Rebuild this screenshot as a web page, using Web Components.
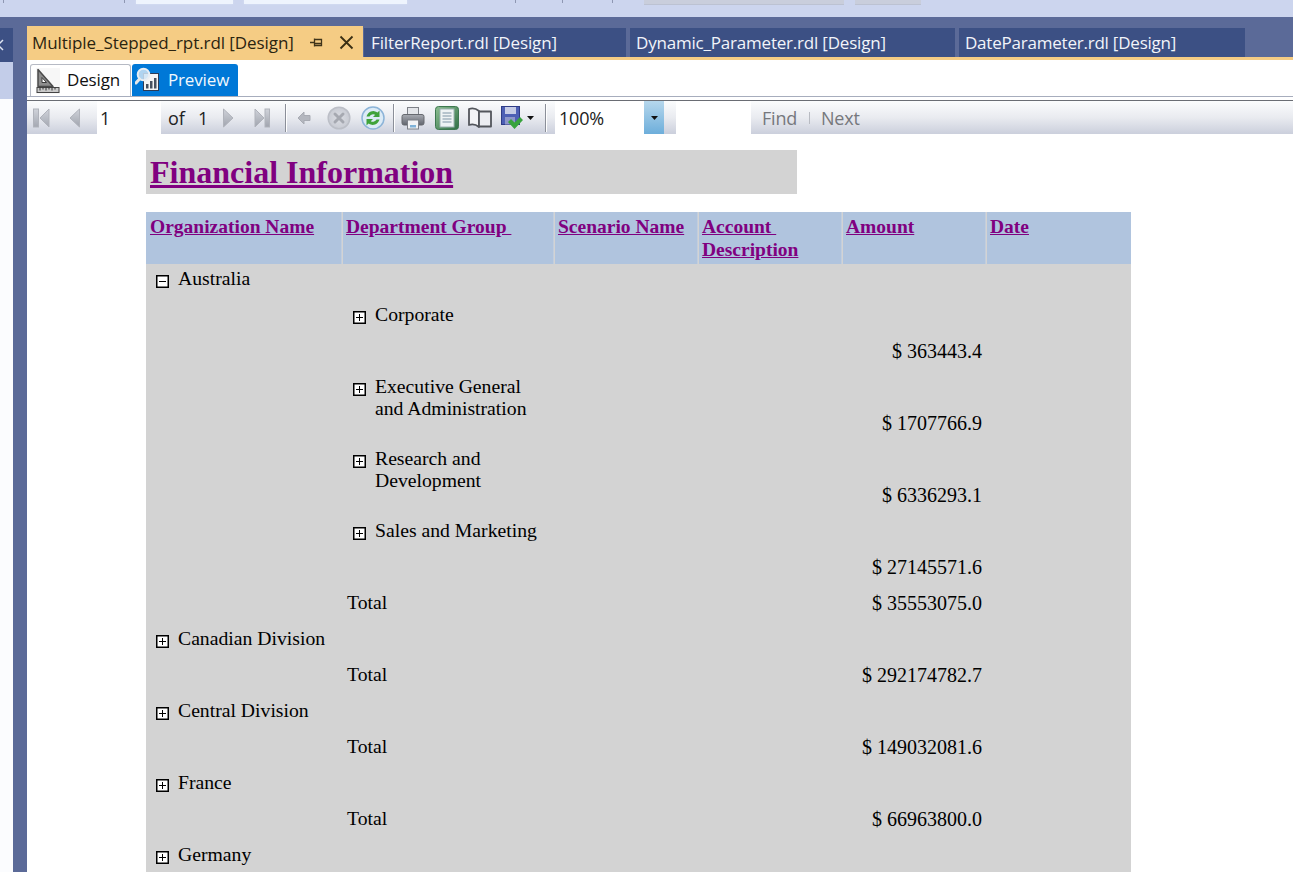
<!DOCTYPE html>
<html lang="en">
<head>
<meta charset="utf-8">
<title>Financial Information</title>
<style>
html,body{margin:0;padding:0;height:872px;overflow:hidden;background:#fff}
</style>
</head>
<body>
<vs-shell>
  <side-panel slot="side"></side-panel>
  <tab-strip slot="tabs">
    <doc-tab active w="336">Multiple_Stepped_rpt.rdl [Design]</doc-tab>
    <doc-tab w="262" style="padding-left:7px">FilterReport.rdl [Design]</doc-tab>
    <doc-tab w="325" style="letter-spacing:-.2px">Dynamic_Parameter.rdl [Design]</doc-tab>
    <doc-tab w="286" style="letter-spacing:-.22px">DateParameter.rdl [Design]</doc-tab>
  </tab-strip>
  <view-tabs slot="views"></view-tabs>
  <report-toolbar slot="toolbar"></report-toolbar>
  <financial-report slot="report"></financial-report>
</vs-shell>

<script>
const ICONS = {
  first:`<svg width="17" height="20" viewBox="0 0 17 20"><defs><linearGradient id="g" x1="0" y1="0" x2="0" y2="1"><stop offset="0" stop-color="#d0d3da"/><stop offset="1" stop-color="#a4a8b2"/></linearGradient></defs><rect x="0.5" y="1" width="5" height="18" fill="url(#g)" stroke="#b0b3bb"/><path d="M16 1 7 10l9 9z" fill="url(#g)" stroke="#b0b3bb" stroke-linejoin="round"/></svg>`,
  prev:`<svg width="15" height="20" viewBox="0 0 15 20"><defs><linearGradient id="g" x1="0" y1="0" x2="0" y2="1"><stop offset="0" stop-color="#d0d3da"/><stop offset="1" stop-color="#a0a4ae"/></linearGradient></defs><path d="M12.500 1 3 10l9.500 9z" fill="url(#g)" stroke="#b0b3bb" stroke-linejoin="round"/></svg>`,
  next:`<svg width="13" height="20" viewBox="0 0 13 20"><defs><linearGradient id="g" x1="0" y1="0" x2="0" y2="1"><stop offset="0" stop-color="#d0d3da"/><stop offset="1" stop-color="#a0a4ae"/></linearGradient></defs><path d="M1.500 1 11 10l-9.500 9z" fill="url(#g)" stroke="#b0b3bb" stroke-linejoin="round"/></svg>`,
  last:`<svg width="16" height="20" viewBox="0 0 16 20"><defs><linearGradient id="g" x1="0" y1="0" x2="0" y2="1"><stop offset="0" stop-color="#d0d3da"/><stop offset="1" stop-color="#a0a4ae"/></linearGradient></defs><path d="M1 1l9 9-9 9z" fill="url(#g)" stroke="#b0b3bb" stroke-linejoin="round"/><rect x="11" y="1" width="4.500" height="18" fill="url(#g)" stroke="#b0b3bb"/></svg>`,
  back:`<svg width="14" height="14" viewBox="0 0 14 14"><path d="M7 1 1 7l6 6V9.500h6v-5H7z" fill="#b4b7bf" stroke="#a8abb3" stroke-linejoin="round"/></svg>`,
  stop:`<svg width="24" height="24" viewBox="0 0 24 24"><defs><radialGradient id="g"><stop offset="0" stop-color="#dcdee4"/><stop offset="1" stop-color="#c8cbd3"/></radialGradient></defs><circle cx="12" cy="12" r="10.800" fill="url(#g)" stroke="#bcbfc7" stroke-width="1.500"/><path d="M8 8l8 8M16 8l-8 8" stroke="#a6a9b1" stroke-width="3" stroke-linecap="round"/></svg>`,
  refresh:`<svg width="24" height="24" viewBox="0 0 24 24"><circle cx="12" cy="12" r="11" fill="#dcebf6" stroke="#8cb4d8" stroke-width="1.500"/><path d="M5.500 10.500A7 7 0 0 1 16.500 6.500L18.500 4.500V11h-6.500l2.200-2.200A4 4 0 0 0 8.500 10.500z" fill="#3fa33a"/><path d="M18.500 13.500A7 7 0 0 1 7.500 17.500L5.500 19.500V13h6.500l-2.200 2.200A4 4 0 0 0 15.500 13.500z" fill="#3fa33a"/></svg>`,
  print:`<svg width="24" height="24" viewBox="0 0 24 24"><defs><linearGradient id="g" x1="0" y1="0" x2="0" y2="1"><stop offset="0" stop-color="#a8abb2"/><stop offset="1" stop-color="#62666e"/></linearGradient></defs><rect x="6.500" y="1.500" width="11" height="8" fill="#e3e5e9" stroke="#7d8087"/><rect x="1" y="8.500" width="22" height="10.500" rx="2" fill="url(#g)" stroke="#66696f"/><rect x="6.500" y="14" width="11" height="9" fill="#f2f3f5" stroke="#7d8087"/><rect x="9" y="19" width="6" height="2.500" fill="#7fb2d8"/></svg>`,
  page:`<svg width="24" height="24" viewBox="0 0 24 24"><defs><linearGradient id="g" x1="0" y1="0" x2="1" y2="1"><stop offset="0" stop-color="#8dbf92"/><stop offset="1" stop-color="#2f6f45"/></linearGradient></defs><rect x="0.500" y="0.500" width="23" height="23" rx="3" fill="url(#g)" stroke="#3d7850"/><rect x="5" y="3" width="14" height="18" fill="#eef3f4" stroke="#9db3b3"/><path d="M7.500 7h9M7.500 10h9M7.500 13h9M7.500 16h9" stroke="#7f95a5" stroke-width="1.200"/></svg>`,
  book:`<svg width="24" height="24" viewBox="0 0 24 24"><path d="M11 5C8 2.500 4 2 1 3v16c3-1 7-.5 10 2z" fill="#f3f4f6" stroke="#53565c" stroke-width="1.800" stroke-linejoin="round"/><path d="M11 5.500h12V20.500H11z" fill="#eceef2" stroke="#53565c" stroke-width="1.800" stroke-linejoin="round"/></svg>`,
  save:`<svg width="23" height="24" viewBox="0 0 23 24"><rect x="0.500" y="0.500" width="18" height="18" fill="#4d5fb5" stroke="#2f3c86"/><rect x="4" y="1" width="11" height="7" fill="#c6cce6"/><rect x="4" y="11" width="10" height="7.500" fill="#8d96c9"/><path d="M10 13l3.500 3.500L19 11l3 3-8.500 9L7 16z" fill="#37a33c"/></svg>`,
  caret:`<svg width="7" height="4" viewBox="0 0 7 4"><path d="M0 0h7L3.500 4z" fill="#111"/></svg>`,
  design:`<svg width="24" height="26" viewBox="0 0 24 26"><rect x="0" y="0" width="24" height="26" fill="#e8e8e8" opacity=".35"/><path d="M2 1.500v17l15 0z" fill="#8d8d8d" stroke="#4a4a4a" stroke-width="1.500" stroke-linejoin="round"/><path d="M6 9.500v5h4.500z" fill="#fff" stroke="#3a3a3a"/><rect x="1" y="19.500" width="22" height="5" fill="#c9c9c9" stroke="#444"/><path d="M4 19.500v3M7 19.500v2M10 19.500v3M13 19.500v2M16 19.500v3M19 19.500v2" stroke="#333"/></svg>`,
  preview:`<svg width="26" height="26" viewBox="0 0 26 26"><rect x="8.500" y="6.500" width="15" height="17" fill="#f4f4f4" stroke="#2b3a55"/><rect x="11" y="17" width="2.500" height="4.500" fill="#47505f"/><rect x="15" y="14" width="2.500" height="7.500" fill="#47505f"/><rect x="19" y="11" width="2.500" height="10.500" fill="#47505f"/><circle cx="8.500" cy="7.500" r="5.800" fill="#cfe4f5" fill-opacity=".85" stroke="#e9eef3" stroke-width="2"/><path d="M4.500 12 1 16" stroke="#e8e8e8" stroke-width="3" stroke-linecap="round"/></svg>`
};

class RsIcon extends HTMLElement{
  connectedCallback(){
    const r=this.shadowRoot||this.attachShadow({mode:'open'});
    r.innerHTML=`<style>:host{display:inline-flex;flex:none;align-items:center;justify-content:center}svg{display:block}</style>${ICONS[this.getAttribute('name')]||''}`;
  }
}
customElements.define('rs-icon',RsIcon);

class VsShell extends HTMLElement{
  constructor(){super();this.attachShadow({mode:'open'}).innerHTML=`<style>
    :host{display:grid;grid-template-columns:13px 14px 1fr;grid-template-rows:17px 1fr;width:1293px;height:872px;overflow:hidden;background:#5b6a98}
    .top{grid-column:1/4;background:#ccd5ee;display:flex;align-items:flex-start}
    .top i{display:block;flex:none;height:4px}
    .tick{width:1px;background:#8e97b2;height:3px!important}
    .field{background:#eef4fd;box-shadow:0 0 2px #dbe3f5}
    .grey{background:#c9cedc;height:4px;box-shadow:0 1px 0 #bcc2d2}
    .side{grid-column:1;grid-row:2;overflow:hidden}
    .frame{grid-column:2;grid-row:2;background:#5b6a98}
    .main{grid-column:3;grid-row:2;display:flex;flex-direction:column;background:#fff;min-width:0;min-height:0;overflow:hidden}
    .head{background:#5b6a98;flex:none}
  </style>
  <div class="top">
    <i class="tick" style="margin-left:3px"></i>
    <i class="tick" style="margin-left:120px"></i>
    <i class="field" style="margin-left:11px;width:97px"></i>
    <i class="field" style="margin-left:11px;width:163px"></i>
    <i class="tick" style="margin-left:108px"></i>
    <i class="tick" style="margin-left:46px"></i>
    <i class="tick" style="margin-left:49px"></i>
    <i class="grey" style="margin-left:31px;width:200px"></i>
    <i class="grey" style="margin-left:11px;width:66px"></i>
  </div>
  <div class="side"><slot name="side"></slot></div>
  <div class="frame"></div>
  <div class="main">
    <div class="head"><slot name="tabs"></slot></div>
    <slot name="views"></slot>
    <slot name="toolbar"></slot>
    <slot name="report"></slot>
  </div>`}
}
customElements.define('vs-shell',VsShell);

class SidePanel extends HTMLElement{
  constructor(){super();this.attachShadow({mode:'open'}).innerHTML=`<style>
    :host{display:flex;flex-direction:column;height:100%}
    .gap{height:11px;background:#5b6a98}
    .a{height:34px;background:#3c5084;overflow:hidden;display:flex;align-items:center}
    .a svg{display:block;margin-left:-4px}
    .b{height:37px;background:#c3cde9}
    .c{flex:1;background:#fbfcfe}
  </style>
  <div class="gap"></div>
  <div class="a"><svg width="9" height="14" viewBox="0 0 9 14"><path d="M7 2 2 7l5 5" fill="none" stroke="#dfe5f2" stroke-width="1.500"/></svg></div>
  <div class="b"></div><div class="c"></div>`}
}
customElements.define('side-panel',SidePanel);

class TabStrip extends HTMLElement{
  constructor(){super();this.attachShadow({mode:'open'}).innerHTML=`<style>
    :host{display:flex;align-items:flex-end;height:43px;box-sizing:border-box;padding-top:9px;background:#5b6a98;border-bottom:3px solid #f5cc84}
    .row{display:flex;gap:4px;align-items:flex-start;height:34px;margin-bottom:-3px}
  </style><div class="row"><slot></slot></div>`}
}
customElements.define('tab-strip',TabStrip);

class DocTab extends HTMLElement{
  constructor(){super();this.attachShadow({mode:'open'}).innerHTML=`<style>
    :host{display:flex;flex:none;align-items:center;box-sizing:border-box;height:29px;margin-top:2px;padding-left:6px;background:#3c5084;color:#f2f4fa;font:17px/29px "Open Sans",sans-serif;letter-spacing:-.13px;white-space:nowrap}
    :host([active]){height:34px;margin-top:0;margin-right:-3px;padding-left:5px;padding-bottom:1px;background:#f5cc84;color:#2b2410;letter-spacing:-.07px}
    .ctl{display:none}
    :host([active]) .ctl{display:flex;align-items:center;margin-left:16px;gap:16px}
    svg{display:block}
  </style><span><slot></slot></span>
  <span class="ctl">
    <svg width="13" height="11" viewBox="0 0 13 11"><path d="M0 5.500h4M4.500 1.500v8M4.500 2.500h7v6h-7M4.500 6.500h7" fill="none" stroke="#40341a" stroke-width="1.300"/></svg>
    <svg width="15" height="15" viewBox="0 0 15 15"><path d="M1.500 1.500l12 12M13.500 1.500l-12 12" stroke="#3a2f14" stroke-width="1.800"/></svg>
  </span>`}
  connectedCallback(){this.style.width=this.getAttribute('w')+'px'}
}
customElements.define('doc-tab',DocTab);

class ViewTabs extends HTMLElement{
  constructor(){super();this.attachShadow({mode:'open'}).innerHTML=`<style>
    :host{display:flex;flex:none;align-items:flex-end;box-sizing:border-box;height:37px;padding-left:3px;background:#fff;border-bottom:1px solid #a7adbd;font:17px "Open Sans",sans-serif;letter-spacing:-.15px}
    .t{display:flex;align-items:center;box-sizing:border-box;height:32px;border-radius:3px 3px 0 0}
    .t span{margin-bottom:2px}
    .d{width:101px;padding-left:5px;gap:7px;color:#111;border:1px solid #b6bac4;border-bottom:0}
    .p{width:106px;padding-left:3px;gap:7px;color:#f2f8fd;background:#0078d7;margin-left:1px}
  </style>
  <div class="t d"><rs-icon name="design"></rs-icon><span>Design</span></div>
  <div class="t p"><rs-icon name="preview"></rs-icon><span>Preview</span></div>`}
}
customElements.define('view-tabs',ViewTabs);

class ReportToolbar extends HTMLElement{
  constructor(){super();
    const ic=(n,ml,w)=>`<rs-icon name="${n}" style="margin-left:${ml}px;width:${w}px"></rs-icon>`;
    const sep=(ml)=>`<i class="sep" style="margin-left:${ml}px"></i>`;
    this.attachShadow({mode:'open'}).innerHTML=`<style>
    :host{display:flex;flex:none;align-items:center;box-sizing:border-box;height:34px;margin-top:3px;background:linear-gradient(#fbfcfd,#e9ebf0 50%,#cbcfdc);border-top:1px solid #6a6d74;font:18px "Open Sans",sans-serif;color:#222;letter-spacing:-.2px}
    .sep{display:block;flex:none;width:1px;height:28px;background:#8b8f99;box-shadow:1px 0 0 #fff}
    .input{flex:none;box-sizing:border-box;height:33px;background:#fff;display:flex;align-items:center}
    span{flex:none;white-space:nowrap}
    .drop{flex:none;width:20px;height:33px;background:linear-gradient(#b6d7ec,#6daedb);display:flex;align-items:center;justify-content:center}
    .mute{color:#76787d}
    .pipe{display:block;flex:none;width:1px;height:12px;background:#b8bbc2}
  </style>
  ${ic('first',6,17)}${ic('prev',17,15)}
  <div class="input" style="margin-left:15px;width:64px;padding-left:3px">1</div>
  <span style="margin-left:7px;width:30px">of</span><span style="width:24px">1</span>
  ${ic('next',0,13)}${ic('last',19,16)}
  ${sep(15)}${ic('back',11,14)}${ic('stop',16,24)}${ic('refresh',10,24)}
  ${sep(8)}${ic('print',7,24)}${ic('page',10,24)}${ic('book',9,24)}${ic('save',9,23)}${ic('caret',3,7)}
  ${sep(11)}
  <div class="input" style="margin-left:9px;width:89px;padding-left:4px">100%</div>
  <div class="drop"><rs-icon name="caret"></rs-icon></div>
  <div class="input" style="margin-left:12px;width:75px"></div>
  <span class="mute" style="margin-left:11px;width:47px">Find</span><i class="pipe"></i><span class="mute" style="margin-left:11px">Next</span>`}
}
customElements.define('report-toolbar',ReportToolbar);

class TreeToggle extends HTMLElement{
  constructor(){super();this.attachShadow({mode:'open'})}
  connectedCallback(){
    const plus=this.getAttribute('kind')!=='minus';
    this.shadowRoot.innerHTML=`<style>:host{display:block;flex:none;width:13px;height:13px}svg{display:block}</style>
    <svg width="13" height="13" viewBox="0 0 13 13"><rect x="0.750" y="0.750" width="11.500" height="11.500" fill="#fff" stroke="#000" stroke-width="1.500"/><path d="M3 6.500h7${plus?'M6.500 3v7':''}" stroke="#000" stroke-width="1"/></svg>`;
  }
}
customElements.define('tree-toggle',TreeToggle);

class FinRow extends HTMLElement{
  constructor(){super();this.attachShadow({mode:'open'})}
  connectedCallback(){
    const a=n=>this.getAttribute(n);
    const label=(txt,t)=>t?`<div class="lab"><tree-toggle kind="${t}"></tree-toggle><span>${txt}</span></div>`:`<div class="lab plain">${txt}</div>`;
    this.shadowRoot.innerHTML=`<style>
      :host{display:grid;grid-template-columns:var(--cols);column-gap:1px;min-height:36px;background:#d3d3d3;font:19.7px/22px "Liberation Serif",serif;color:#000}
      :host([tall]){min-height:72px}
      .c{padding:3px 4px 4px;min-width:0}
      .lab{display:flex}
      .lab tree-toggle{margin:8px 9px 0 6px}
      .amt{grid-column:5;text-align:right;white-space:nowrap;font-size:20px;padding-top:4px}
      :host([tall]) .amt{padding-top:40px}
    </style>
    <div class="c">${a('org')?label(a('org'),a('toggle')):''}</div>
    <div class="c">${a('dept')?label(a('dept'),a('toggle')):''}</div>
    ${a('amount')?`<div class="c amt">${a('amount')}</div>`:''}`;
  }
}
customElements.define('fin-row',FinRow);

class FinancialReport extends HTMLElement{
  constructor(){super();this.attachShadow({mode:'open'}).innerHTML=`<style>
    :host{display:block;flex:none;padding:16px 0 0 119px;--cols:196px 211px 143px 143px 143px 144px;font-family:"Liberation Serif",serif}
    h1{margin:0;width:651px;height:44px;box-sizing:border-box;padding:4px;background:#d3d3d3;color:#800080;font:bold 32px/36px "Liberation Serif",serif;text-decoration:underline}
    .tbl{width:985px;margin-top:18px}
    .hd{display:grid;grid-template-columns:var(--cols);column-gap:1px;background:#d3d3d3}
    .hd div{background:#b0c4de;height:52px;box-sizing:border-box;padding:3px 4px 4px 3px;font:bold 19.5px/23px "Liberation Serif",serif;color:#800080;text-decoration:underline;white-space:pre-wrap;box-shadow:inset -1px 0 0 #c2cede}
    .hd div:first-child{padding-left:4px}
    .hd div:last-child{box-shadow:none}
  </style>
  <h1>Financial Information</h1>
  <div class="tbl">
    <div class="hd"><div>Organization Name</div><div>Department Group </div><div>Scenario Name</div><div>Account 
Description</div><div>Amount</div><div>Date</div></div>
    <fin-row org="Australia" toggle="minus"></fin-row>
    <fin-row dept="Corporate" toggle="plus" amount="$ 363443.4" tall></fin-row>
    <fin-row dept="Executive General and Administration" toggle="plus" amount="$ 1707766.9" tall></fin-row>
    <fin-row dept="Research and Development" toggle="plus" amount="$ 6336293.1" tall></fin-row>
    <fin-row dept="Sales and Marketing" toggle="plus" amount="$ 27145571.6" tall></fin-row>
    <fin-row dept="Total" amount="$ 35553075.0"></fin-row>
    <fin-row org="Canadian Division" toggle="plus"></fin-row>
    <fin-row dept="Total" amount="$ 292174782.7"></fin-row>
    <fin-row org="Central Division" toggle="plus"></fin-row>
    <fin-row dept="Total" amount="$ 149032081.6"></fin-row>
    <fin-row org="France" toggle="plus"></fin-row>
    <fin-row dept="Total" amount="$ 66963800.0"></fin-row>
    <fin-row org="Germany" toggle="plus"></fin-row>
  </div>`}
}
customElements.define('financial-report',FinancialReport);
</script>
</body>
</html>
